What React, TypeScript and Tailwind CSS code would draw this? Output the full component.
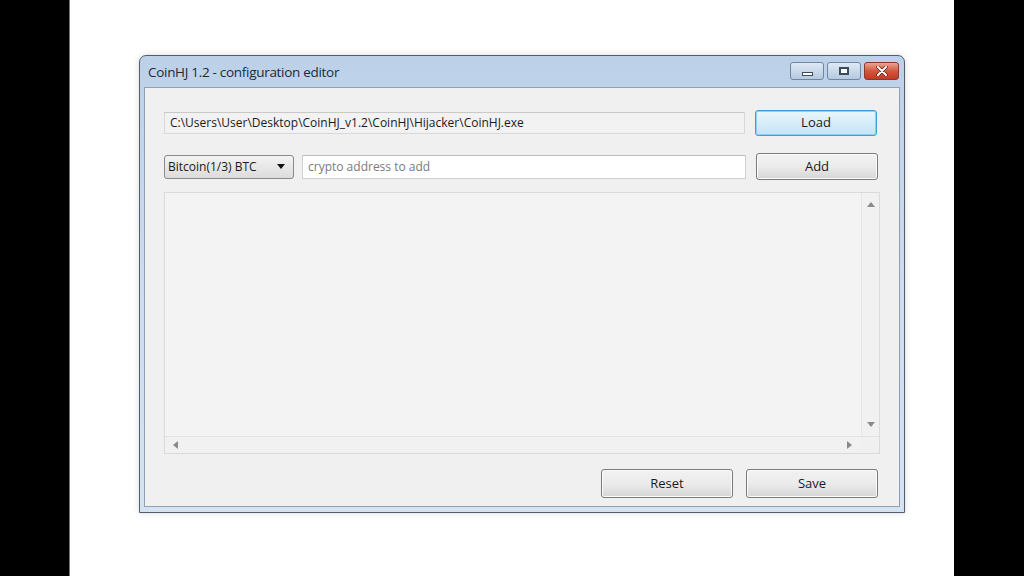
import React from "react";

const ui = { fontFamily: '"Open Sans", "Noto Sans", "Liberation Sans", sans-serif' };

function CaptionButtons() {
  return (
    <div className="flex items-start gap-[3px] pt-[6px] pr-[1px]">
      <div className="w-[34px] h-[18px] rounded-[3px] border border-[#6f86a3] bg-gradient-to-b from-[#dfe9f5] to-[#b6c9e0] flex items-center justify-center">
        <div className="w-[11px] h-[4px] border border-[#3b4a5e] bg-white mt-[5px]" />
      </div>
      <div className="w-[34px] h-[18px] rounded-[3px] border border-[#6f86a3] bg-gradient-to-b from-[#dfe9f5] to-[#b6c9e0] flex items-center justify-center">
        <div className="w-[10px] h-[8px] border-2 border-[#3b4a5e] bg-white" />
      </div>
      <div className="w-[35px] h-[18px] rounded-[3px] border border-[#8a3a2c] bg-gradient-to-b from-[#e8a493] via-[#d4553c] to-[#c23a22] flex items-center justify-center">
        <svg width="12" height="10" viewBox="0 0 12 10">
          <path d="M2 1 L10 9 M10 1 L2 9" stroke="#5a1a10" strokeWidth="3.4" strokeLinecap="round" />
          <path d="M2 1 L10 9 M10 1 L2 9" stroke="#ffffff" strokeWidth="2" strokeLinecap="round" />
        </svg>
      </div>
    </div>
  );
}

function Button({ label, w, h, focus }: { label: string; w: string; h: string; focus?: boolean }) {
  return (
    <div
      className={`${w} ${h} rounded-[3px] border flex items-center justify-center text-[13px] text-[#1a1a1a] ${
        focus
          ? "border-[#3c9fd6] bg-gradient-to-b from-[#eaf6fd] to-[#c4e4f6] shadow-[inset_0_0_0_1px_#8fd1f5]"
          : "border-[#7a7a7a] bg-gradient-to-b from-[#f2f2f2] via-[#ebebeb] to-[#d6d6d6] shadow-[inset_0_0_0_1px_#fcfcfc]"
      }`}
    >
      {label}
    </div>
  );
}

function Tri({ dir }: { dir: "up" | "down" | "left" | "right" }) {
  const d = {
    up: "M0 5 L4 0 L8 5 Z",
    down: "M0 0 L8 0 L4 5 Z",
    left: "M5 0 L5 8 L0 4 Z",
    right: "M0 0 L5 4 L0 8 Z",
  }[dir];
  const vertical = dir === "up" || dir === "down";
  return (
    <svg width={vertical ? 8 : 5} height={vertical ? 5 : 8} viewBox={vertical ? "0 0 8 5" : "0 0 5 8"}>
      <path d={d} fill="#8a8a8a" />
    </svg>
  );
}

export default function App() {
  return (
    <div className="w-[1024px] h-[576px] flex bg-black overflow-hidden" style={ui}>
      <div className="w-[69px] h-full bg-black" />
      <div className="w-[885px] h-full bg-white border-l border-[#777] pl-[69px] pt-[55px]">
        {/* window */}
        <div className="w-[766px] h-[458px] rounded-t-[7px] border border-[#4f5d6e] bg-gradient-to-b from-[#bcd1e8] via-[#cddcee] to-[#d5e2f1] px-[4px] pb-[5px] flex flex-col shadow-[0_0_6px_rgba(0,0,0,0.15)]">
          <div className="h-[31px] flex items-start justify-between pl-[4px]">
            <div className="text-[13.5px] text-[#1c2a3a] pt-[6px] tracking-[-0.3px]">CoinHJ 1.2 - configuration editor</div>
            <CaptionButtons />
          </div>
          <div className="flex-1 bg-[#f0f0f0] border border-[#8ea0b5] pl-[19px] pt-[22px] flex flex-col">
            {/* row 1 */}
            <div className="flex items-center">
              <div className="w-[581px] h-[22px] bg-[#f2f2f2] border border-[#d8d8d8] border-t-[#c9c9c9] flex items-center pl-[5px] text-[12px] text-[#1a1a1a]">
                C:\Users\User\Desktop\CoinHJ_v1.2\CoinHJ\Hijacker\CoinHJ.exe
              </div>
              <div className="ml-[10px]">
                <Button label="Load" w="w-[122px]" h="h-[26px]" focus />
              </div>
            </div>
            {/* row 2 */}
            <div className="flex items-center mt-[17px]">
              <div className="w-[130px] h-[24px] rounded-[3px] border border-[#8a8a8a] bg-gradient-to-b from-[#f3f3f3] to-[#dcdcdc] flex items-center justify-between pl-[3px] pr-[8px] text-[12px] text-[#1a1a1a]">
                <span>Bitcoin(1/3) BTC</span>
                <svg width="8" height="5" viewBox="0 0 8 5">
                  <path d="M0 0 L8 0 L4 5 Z" fill="#111" />
                </svg>
              </div>
              <div className="ml-[8px] w-[444px] h-[24px] bg-white border border-[#d0d0d0] border-t-[#bdbdbd] flex items-center pl-[5px] text-[12px] text-[#7a7a7a]">
                crypto address to add
              </div>
              <div className="ml-[10px]">
                <Button label="Add" w="w-[122px]" h="h-[27px]" />
              </div>
            </div>
            {/* list */}
            <div className="mt-[12px] w-[716px] h-[262px] border border-[#dadada] bg-[#f3f3f3] flex flex-col">
              <div className="flex-1 flex">
                <div className="flex-1" />
                <div className="w-[18px] border-l border-[#e6e6e6] bg-[#f1f1f1] flex flex-col items-center justify-between py-[9px]">
                  <Tri dir="up" />
                  <Tri dir="down" />
                </div>
              </div>
              <div className="h-[17px] flex border-t border-[#e2e2e2]">
                <div className="flex-1 bg-[#f1f1f1] flex items-center justify-between pl-[8px] pr-[9px]">
                  <Tri dir="left" />
                  <Tri dir="right" />
                </div>
                <div className="w-[18px] bg-[#f0f0f0]" />
              </div>
            </div>
            {/* bottom buttons */}
            <div className="flex justify-end mt-[15px] pr-[21px]">
              <Button label="Reset" w="w-[132px]" h="h-[29px]" />
              <div className="ml-[13px]">
                <Button label="Save" w="w-[132px]" h="h-[29px]" />
              </div>
            </div>
          </div>
        </div>
      </div>
      <div className="w-[70px] h-full bg-black" />
    </div>
  );
}
